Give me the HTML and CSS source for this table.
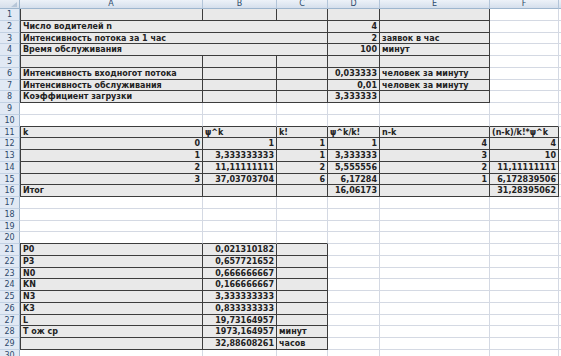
FILE: index.html
```html
<!DOCTYPE html>
<html lang="ru">
<head>
<meta charset="utf-8">
<title>Лист</title>
<link rel="stylesheet" href="styles.css">
</head>
<body>
<div class="sheet">
  <div class="corner"><span class="tri"></span></div>
  <div class="ch">A</div><div class="ch">B</div><div class="ch">C</div><div class="ch">D</div><div class="ch">E</div><div class="ch">F</div><div class="ch end"></div>

  <div class="rh">1</div><div class="c d l"></div><div class="c d"></div><div class="c d"></div><div class="c d"></div><div class="c d"></div><div class="c"></div><div class="c"></div>

  <div class="rh">2</div><div class="c d l span3">Число водителей n</div><div class="c d r">4</div><div class="c d"></div><div class="c"></div><div class="c"></div>
  <div class="rh">3</div><div class="c d l span3">Интенсивность потока за 1 час</div><div class="c d r">2</div><div class="c d">заявок в час</div><div class="c"></div><div class="c"></div>
  <div class="rh">4</div><div class="c d l span3">Время обслуживания</div><div class="c d r">100</div><div class="c d">минут</div><div class="c"></div><div class="c"></div>

  <div class="rh">5</div><div class="c d l"></div><div class="c d"></div><div class="c d"></div><div class="c d"></div><div class="c d"></div><div class="c"></div><div class="c"></div>
  <div class="rh">6</div><div class="c d l">Интенсивность входногот потока</div><div class="c d"></div><div class="c d"></div><div class="c d r">0,033333</div><div class="c d">человек за минуту</div><div class="c"></div><div class="c"></div>
  <div class="rh">7</div><div class="c d l">Интенсивность обслуживания</div><div class="c d"></div><div class="c d"></div><div class="c d r">0,01</div><div class="c d">человек за минуту</div><div class="c"></div><div class="c"></div>
  <div class="rh">8</div><div class="c d l">Коэффициент загрузки</div><div class="c d"></div><div class="c d"></div><div class="c d r">3,333333</div><div class="c d"></div><div class="c"></div><div class="c"></div>

  <div class="rh">9</div><div class="c"></div><div class="c"></div><div class="c"></div><div class="c"></div><div class="c"></div><div class="c"></div><div class="c"></div>
  <div class="rh">10</div><div class="c b"></div><div class="c b"></div><div class="c b"></div><div class="c b"></div><div class="c b"></div><div class="c b"></div><div class="c"></div>

  <div class="rh">11</div><div class="c d l">k</div><div class="c d">ψ^k</div><div class="c d">k!</div><div class="c d">ψ^k/k!</div><div class="c d">n-k</div><div class="c d">(n-k)/k!*ψ^k</div><div class="c"></div>
  <div class="rh">12</div><div class="c d l r">0</div><div class="c d r">1</div><div class="c d r">1</div><div class="c d r">1</div><div class="c d r">4</div><div class="c d r">4</div><div class="c"></div>
  <div class="rh">13</div><div class="c d l r">1</div><div class="c d r">3,333333333</div><div class="c d r">1</div><div class="c d r">3,333333</div><div class="c d r">3</div><div class="c d r">10</div><div class="c"></div>
  <div class="rh">14</div><div class="c d l r">2</div><div class="c d r">11,11111111</div><div class="c d r">2</div><div class="c d r">5,555556</div><div class="c d r">2</div><div class="c d r">11,11111111</div><div class="c"></div>
  <div class="rh">15</div><div class="c d l r">3</div><div class="c d r">37,03703704</div><div class="c d r">6</div><div class="c d r">6,17284</div><div class="c d r">1</div><div class="c d r">6,172839506</div><div class="c"></div>
  <div class="rh">16</div><div class="c d l">Итог</div><div class="c d"></div><div class="c d"></div><div class="c d r">16,06173</div><div class="c d"></div><div class="c d r">31,28395062</div><div class="c"></div>

  <div class="rh">17</div><div class="c"></div><div class="c"></div><div class="c"></div><div class="c"></div><div class="c"></div><div class="c"></div><div class="c"></div>
  <div class="rh">18</div><div class="c"></div><div class="c"></div><div class="c"></div><div class="c"></div><div class="c"></div><div class="c"></div><div class="c"></div>
  <div class="rh">19</div><div class="c"></div><div class="c"></div><div class="c"></div><div class="c"></div><div class="c"></div><div class="c"></div><div class="c"></div>
  <div class="rh">20</div><div class="c b"></div><div class="c b"></div><div class="c b"></div><div class="c"></div><div class="c"></div><div class="c"></div><div class="c"></div>

  <div class="rh">21</div><div class="c d l">P0</div><div class="c d r">0,021310182</div><div class="c d"></div><div class="c"></div><div class="c"></div><div class="c"></div><div class="c"></div>
  <div class="rh">22</div><div class="c d l">P3</div><div class="c d r">0,657721652</div><div class="c d"></div><div class="c"></div><div class="c"></div><div class="c"></div><div class="c"></div>
  <div class="rh">23</div><div class="c d l">N0</div><div class="c d r">0,666666667</div><div class="c d"></div><div class="c"></div><div class="c"></div><div class="c"></div><div class="c"></div>
  <div class="rh">24</div><div class="c d l">KN</div><div class="c d r">0,166666667</div><div class="c d"></div><div class="c"></div><div class="c"></div><div class="c"></div><div class="c"></div>
  <div class="rh">25</div><div class="c d l">N3</div><div class="c d r">3,333333333</div><div class="c d"></div><div class="c"></div><div class="c"></div><div class="c"></div><div class="c"></div>
  <div class="rh">26</div><div class="c d l">K3</div><div class="c d r">0,833333333</div><div class="c d"></div><div class="c"></div><div class="c"></div><div class="c"></div><div class="c"></div>
  <div class="rh">27</div><div class="c d l">L</div><div class="c d r">19,73164957</div><div class="c d"></div><div class="c"></div><div class="c"></div><div class="c"></div><div class="c"></div>
  <div class="rh">28</div><div class="c d l">T ож ср</div><div class="c d r">1973,164957</div><div class="c d">минут</div><div class="c"></div><div class="c"></div><div class="c"></div><div class="c"></div>
  <div class="rh">29</div><div class="c d l"></div><div class="c d r">32,88608261</div><div class="c d">часов</div><div class="c"></div><div class="c"></div><div class="c"></div><div class="c"></div>

  <div class="rh">30</div><div class="c"></div><div class="c"></div><div class="c"></div><div class="c"></div><div class="c"></div><div class="c"></div><div class="c"></div>
</div>
</body>
</html>
```
FILE: styles.css
```css
html, body {
  margin: 0;
  padding: 0;
  background: #ffffff;
  overflow: hidden;
}

.sheet {
  display: grid;
  grid-template-columns: 20px 183px 74px 51px 52px 110px 69px 1fr;
  grid-template-rows: 9px repeat(30, 11.75px);
  width: 561px;
  height: 356px;
  font-family: "DejaVu Sans", Verdana, sans-serif;
  font-size: 8px;
  font-weight: bold;
  color: #222222;
}

.corner {
  position: relative;
  background: linear-gradient(#e9eef5, #d6dfeb);
  border-right: 1px solid #9eb6ce;
  border-bottom: 1px solid #9eb6ce;
  box-sizing: border-box;
}

.tri {
  position: absolute;
  right: 2px;
  bottom: 1px;
  width: 0;
  height: 0;
  border-left: 6px solid transparent;
  border-bottom: 5px solid #b7c6d8;
}

.ch {
  background: linear-gradient(#edf2f8, #d5dfec);
  border-right: 1px solid #b3c5d9;
  border-bottom: 1px solid #9eb6ce;
  box-sizing: border-box;
  color: #2e4a6b;
  font-weight: normal;
  font-size: 8px;
  line-height: 8px;
  text-align: center;
}

.ch.end {
  border-right: none;
}

.rh {
  background: #e1e9f4;
  border-right: 1px solid #9eb6ce;
  border-bottom: 1px solid #c2d1e3;
  box-sizing: border-box;
  color: #2e4a6b;
  font-weight: normal;
  font-size: 8px;
  line-height: 11px;
  text-align: center;
}

.c {
  border-right: 1px solid #d4d9e3;
  border-bottom: 1px solid #d4d9e3;
  box-sizing: border-box;
  padding: 0 2px;
  line-height: 11px;
  white-space: nowrap;
  overflow: visible;
}

.c.d {
  background: #e9e9e9;
  border-right-color: #3c3c3c;
  border-bottom-color: #3c3c3c;
}

.c.b {
  border-bottom-color: #3c3c3c;
}

.c.l {
  box-shadow: inset 1px 0 0 #3c3c3c;
  padding-left: 3px;
}

.c.r {
  text-align: right;
}

.span3 {
  grid-column: span 3;
}
```
